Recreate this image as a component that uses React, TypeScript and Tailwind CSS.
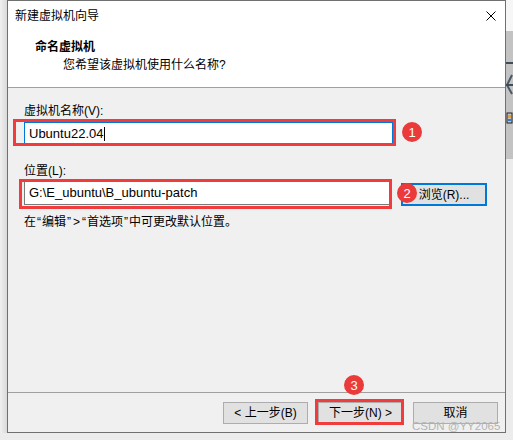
import React from "react";

// numbered red marker drawn over the dialog
const Marker = ({ n, className }: { n: number; className: string }) => (
  <div
    className={`absolute w-[20px] h-[20px] rounded-full bg-[#ea3a3a] text-white text-[13px] leading-none font-['Liberation_Sans',sans-serif] flex items-center justify-center ${className}`}
  >
    {n}
  </div>
);

const CloseIcon = () => (
  <svg width="10" height="10" viewBox="0 0 10 10">
    <path d="M0.5 0.5 L9.5 9.5 M9.5 0.5 L0.5 9.5" stroke="#000" strokeWidth="1" />
  </svg>
);

// narrow punctuation with a hair of room on each side
const Q = ({ c }: { c: string }) => <span className="mx-[1px]">{c}</span>;

const App = () => {
  return (
    <div className="w-[513px] h-[440px] flex bg-[#ececec] overflow-hidden text-black font-['Liberation_Sans','Noto_Sans_CJK_SC',sans-serif]">
      {/* shadow on the left of the window */}
      <div className="w-[7px] h-[433px] bg-linear-to-r from-[#f0f0f0] to-[#dadada]" />

      {/* wizard window */}
      <div className="relative w-[499px] h-[433px] border border-[#707070] bg-[#f0f0f0] flex flex-col">
        {/* title + header */}
        <div className="h-[87px] bg-white border-b border-[#a0a0a0] flex flex-col">
          <div className="h-[30px] flex items-center justify-between pl-[7px] pr-[9px] text-[12px] leading-[16px]">
            <span>新建虚拟机向导</span>
            <CloseIcon />
          </div>
          <div className="mt-[8px] pl-[27px] text-[12px] leading-[16px] font-bold">命名虚拟机</div>
          <div className="mt-[2px] pl-[55px] text-[12px] leading-[16px]">您希望该虚拟机使用什么名称?</div>
        </div>

        {/* form */}
        <div className="flex-1 pt-[15px] pl-[16px] text-[12px] leading-[16px]">
          <div>虚拟机名称(V):</div>
          <div className="relative mt-[3px] flex">
            <div className="relative w-[369px] h-[23px] border border-[#0078d7] bg-white pl-[4px] flex items-center text-[13px]">
              <span>Ubuntu22.04</span>
              <span className="w-[1px] h-[14px] bg-black ml-[1px]" />
              <div className="absolute left-[-12px] top-[-4px] right-[-4px] bottom-[-2px] border-[3px] border-[#f03c3c]" />
            </div>
            <Marker n={1} className="left-[378px] top-0" />
          </div>

          <div className="mt-[18px]">位置(L):</div>
          <div className="relative mt-[2px] flex items-start">
            <div className="relative w-[366px] h-[24px] border border-[#7a7a7a] bg-white pl-[4px] flex items-center text-[13px]">
              <span>G:\E_ubuntu\B_ubuntu-patch</span>
              <div className="absolute left-[-6px] top-[-3px] right-[-3px] bottom-[-5px] border-[3px] border-[#f03c3c]" />
            </div>
            <button
              type="button"
              className="ml-[11px] mt-[2px] w-[86px] h-[23px] border-2 border-[#0078d7] bg-[#e1e1e1] text-[12px] leading-none flex items-center justify-center"
            >
              浏览(R)...
            </button>
            <Marker n={2} className="left-[373px] top-[2px]" />
          </div>

          <div className="mt-[8px]">
            在<Q c="“" />编辑<Q c="”" /><Q c=">" /><Q c="“" />首选项<Q c="”" />中可更改默认位置。
          </div>
        </div>

        {/* buttons */}
        <div className="h-[40px] border-t border-[#a0a0a0] flex justify-end gap-[10px] pr-[7px] pt-[9px] text-[12px]">
          <button type="button" className="w-[85px] h-[22px] border border-[#adadad] bg-[#e1e1e1] leading-none">
            &lt; 上一步(B)
          </button>
          <button type="button" className="relative w-[85px] h-[22px] border border-[#adadad] bg-[#e1e1e1] leading-none">
            下一步(N) &gt;
            <div className="absolute left-[-4px] top-[-4px] right-[-2px] bottom-[-2px] border-[3px] border-[#f03c3c]" />
            <Marker n={3} className="left-[25px] top-[-28px]" />
          </button>
          <button type="button" className="w-[85px] h-[22px] border border-[#adadad] bg-[#e1e1e1] leading-none">
            取消
          </button>
        </div>

        <div className="absolute left-[404px] top-[419px] text-[11.5px] leading-[13px] text-[#b4b4b4] font-['Liberation_Sans',sans-serif]">
          CSDN @YY2065
        </div>
      </div>

      {/* strip of the window behind */}
      <div className="w-[7px] h-[440px] flex flex-col">
        <div className="h-[31px] bg-[#f6f6f6]" />
        <div className="h-[128px] bg-[#c3c3c3]">
          <svg width="7" height="128" viewBox="0 0 7 128">
            <rect x="0" y="31" width="7" height="2" fill="#3f4d5a" />
            <path d="M6 44 L1 54 L6 63" stroke="#4a5966" strokeWidth="2" fill="none" />
            <rect x="0" y="53" width="7" height="2" fill="#3f4d5a" />
            <rect x="1" y="82" width="5" height="10" fill="none" stroke="#222" strokeWidth="1" />
            <rect x="2" y="84" width="3" height="3" fill="#e8a030" />
            <rect x="2" y="88" width="3" height="2" fill="#3a78c8" />
          </svg>
        </div>
        <div className="flex-1 bg-[#ececec]" />
      </div>
    </div>
  );
};

export default App;
